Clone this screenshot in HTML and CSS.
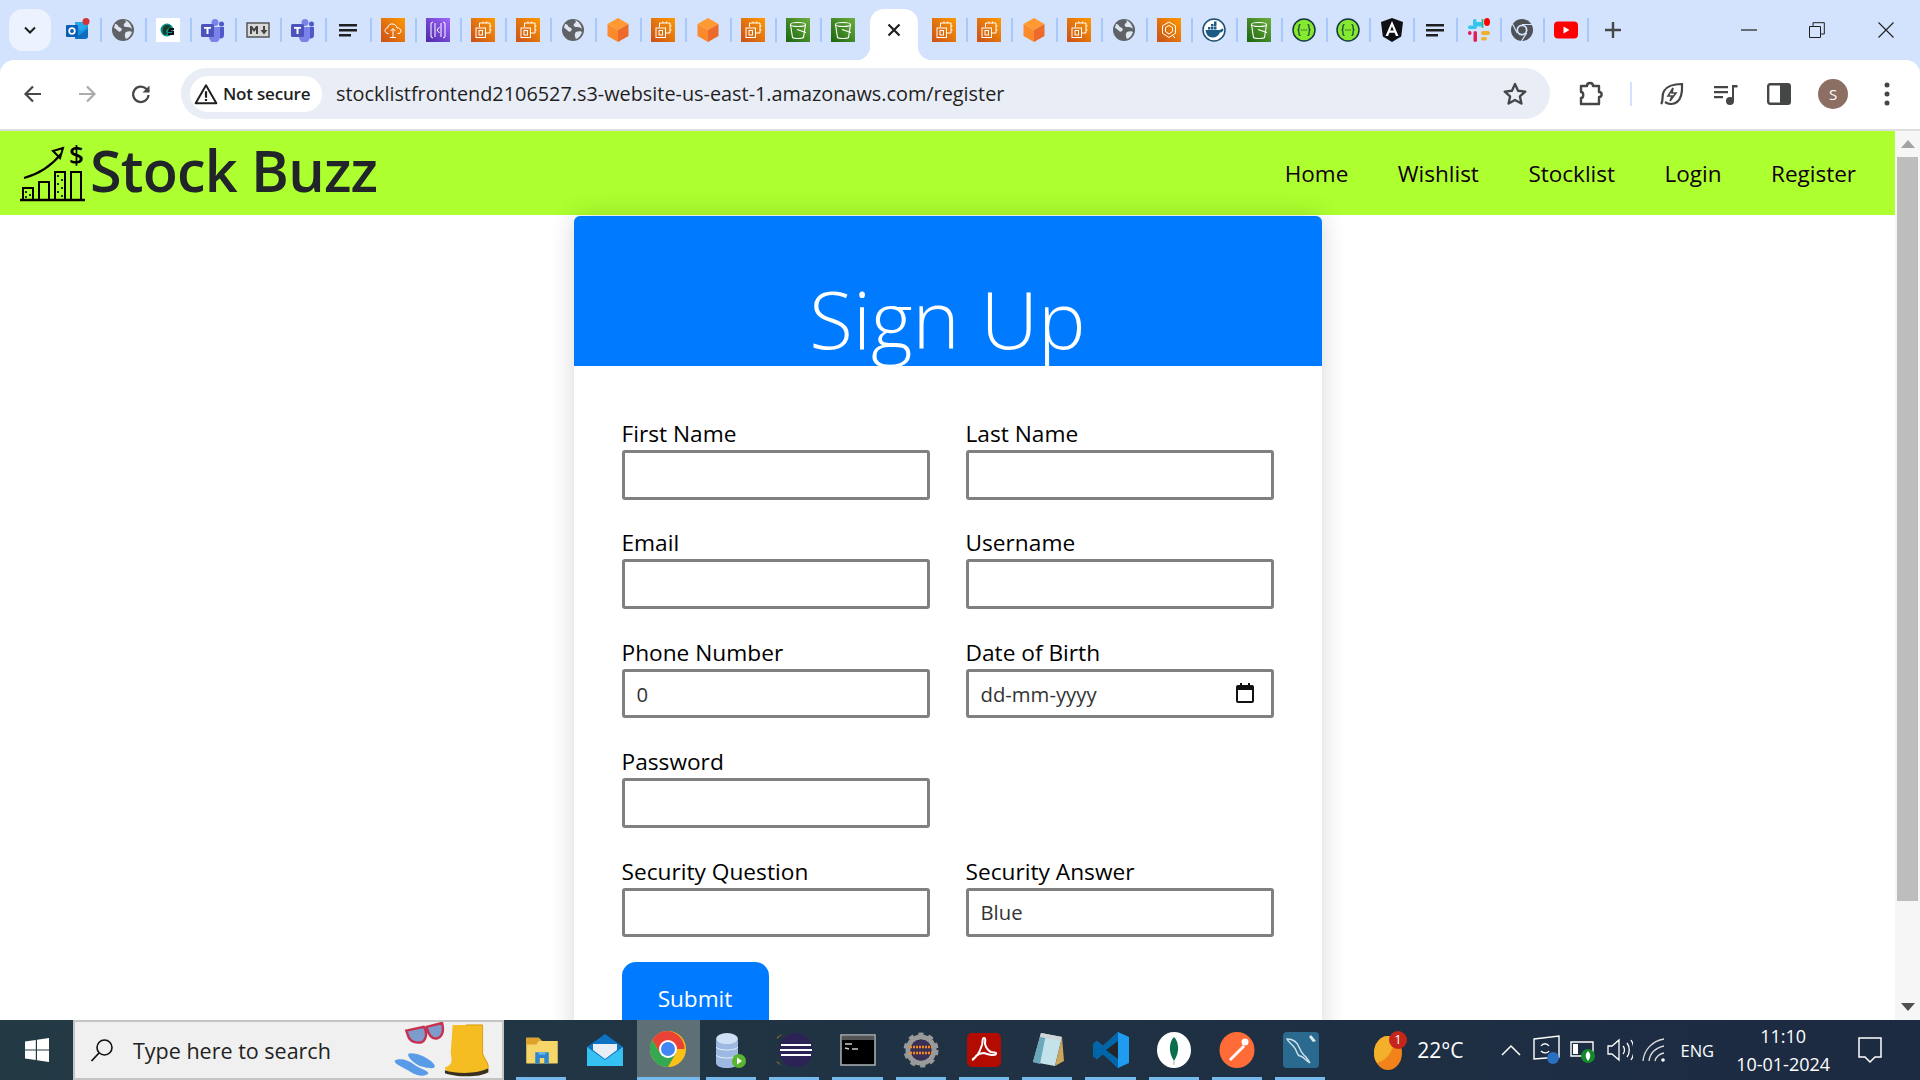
FILE: index.html
```html
<!DOCTYPE html>
<html lang="en">
<head>
<meta charset="utf-8">
<title>Stock Buzz - Register</title>
<link rel="stylesheet" href="styles.css">
</head>
<body>
<svg class="defs" width="0" height="0" aria-hidden="true">
  <defs>
    <linearGradient id="gOrange" x1="0" y1="1" x2="1" y2="0"><stop offset="0" stop-color="#c8511b"/><stop offset="1" stop-color="#ff9900"/></linearGradient>
    <linearGradient id="gGreen" x1="0" y1="1" x2="1" y2="0"><stop offset="0" stop-color="#1b660f"/><stop offset="1" stop-color="#6cae3e"/></linearGradient>
    <linearGradient id="gPurple" x1="0" y1="1" x2="1" y2="0"><stop offset="0" stop-color="#4d27a8"/><stop offset="1" stop-color="#a166ff"/></linearGradient>
    <symbol id="ec2" viewBox="0 0 24 24"><rect width="24" height="24" fill="url(#gOrange)"/><g fill="none" stroke="#fff" stroke-width="1"><path d="M8.500 9V5h10.500v10h-4"/><rect x="5" y="10" width="9.500" height="9.500"/><rect x="8" y="12.500" width="3.500" height="4.500"/><path d="M12 3.500V5M15.500 3.500V5M19 8h1.500M19 12h1.500"/></g></symbol>
    <symbol id="cube" viewBox="0 0 24 24"><path d="M12 0 22.500 6 12 12 1.500 6z" fill="#ff9a33"/><path d="M1.500 6 12 12v12L1.500 18z" fill="#fb8a2c"/><path d="M22.500 6 12 12v12l10.500-6z" fill="#ec6a2a"/></symbol>
    <symbol id="s3" viewBox="0 0 24 24"><rect width="24" height="24" fill="url(#gGreen)"/><g fill="none" stroke="#fff" stroke-width="1.100"><ellipse cx="12" cy="6.500" rx="7.500" ry="2"/><path d="M4.500 6.500 6.500 19.500c1.500 1.300 9.500 1.300 11 0l2-13"/><path d="M11 11.500l9 3"/></g></symbol>
    <symbol id="globe" viewBox="0 0 24 24"><circle cx="12" cy="12" r="11" fill="#5f6368"/><path d="M4 6c2 0 3 1 3 2s2 1 3 2 1 2 0 3-2 1-3 0-3-3-4-3zM14 2c2 2 0 3-1 4s0 3 2 3 4 0 6 2c-1-5-4-8-7-9zM15 14c2-1 5-1 6 0-1 3-3 6-6 7-1-2-2-5 0-7z" fill="#dfe6f0"/></symbol>
    <symbol id="teams" viewBox="0 0 24 24"><circle cx="14" cy="4.500" r="3.500" fill="#7b83eb"/><circle cx="20.500" cy="6" r="2.500" fill="#5059c9"/><path d="M16 9h7v8a3.500 3.500 0 0 1-7 0z" fill="#5059c9"/><path d="M8 9h11v10a5 5 0 0 1-11 0z" fill="#7b83eb"/><rect x="0" y="6" width="13" height="13" rx="1.500" fill="#4b53bc"/><path d="M3 9h7v1.800H7.500V16h-2v-5.200H3z" fill="#fff"/></symbol>
    <symbol id="lines" viewBox="0 0 24 24"><path d="M3 6h18v2.400H3zM3 11h18v2.400H3zM3 16h12v2.400H3z" fill="#1f1f1f"/></symbol>
    <symbol id="api" viewBox="0 0 24 24"><circle cx="12" cy="12" r="11" fill="#85ea2d" stroke="#173647" stroke-width="1.500"/><path d="M8.500 6.500c-2 0-1.500 2-1.500 3.500s-1 2-1.500 2c.5 0 1.500.5 1.500 2s-.5 3.500 1.500 3.500M15.500 6.500c2 0 1.500 2 1.500 3.500s1 2 1.500 2c-.5 0-1.500.5-1.500 2s.5 3.500-1.500 3.500" fill="none" stroke="#173647" stroke-width="1.200"/><path d="M9.500 12h.8M11.600 12h.8M13.700 12h.8" stroke="#173647" stroke-width="1.400"/></symbol>
    <symbol id="star" viewBox="0 0 24 24"><path d="M12 3.500l2.600 5.700 6.200.7-4.600 4.200 1.300 6.100L12 17.100l-5.500 3.100 1.300-6.100-4.600-4.200 6.200-.7z" fill="none" stroke="#444746" stroke-width="2" stroke-linejoin="round"/></symbol>
  </defs>
</svg>

<header class="tabstrip">
  <div class="tab-search"><svg width="16" height="16" viewBox="0 0 16 16"><path d="M3 5.500 8 10.500 13 5.500" fill="none" stroke="#1f1f1f" stroke-width="2"/></svg></div>
  <div class="tabs">
    <div class="tab"><svg class="ico" viewBox="0 0 24 24"><path d="M9 4h13v14a2 2 0 0 1-2 2H9z" fill="#1490df"/><path d="M9 4h13v4l-6.500 5L9 8z" fill="#28a8ea"/><path d="M9 20l13-9v7a3 3 0 0 1-3 3H9z" fill="#0f6cbd"/><rect y="7" width="12" height="12" rx="1" fill="#0a5fb4"/><circle cx="6" cy="13" r="2.800" fill="none" stroke="#fff" stroke-width="1.700"/><circle cx="20" cy="3.500" r="3.500" fill="#d13438"/></svg></div>
    <div class="tab"><svg class="ico"><use href="#globe"/></svg></div>
    <div class="tab"><svg class="ico" viewBox="0 0 24 24"><rect width="24" height="24" fill="#fff"/><circle cx="11" cy="12" r="6.500" fill="#0d8f8f"/><path d="M8 8c3-2 6-1 7 1l-3 1-2 3 1 3-3 1c-2-3-2-6 0-9z" fill="#153d22"/><path d="M13 10h5v2h-3v1h3v4h-6v-2h4v-1h-4z" fill="#111"/></svg></div>
    <div class="tab"><svg class="ico"><use href="#teams"/></svg></div>
    <div class="tab"><svg class="ico" viewBox="0 0 24 24"><rect x="1" y="5" width="22" height="14" fill="#d8d8d8" stroke="#555" stroke-width="1.500"/><path d="M4 16V8h2l2 3 2-3h2v8h-2v-4.500L8 14l-2-2.500V16zM17 8h2v4h2.500L18 16.500 14.500 12H17z" fill="#444"/></svg></div>
    <div class="tab"><svg class="ico"><use href="#teams"/></svg></div>
    <div class="tab"><svg class="ico"><use href="#lines"/></svg></div>
    <div class="tab"><svg class="ico" viewBox="0 0 24 24"><rect width="24" height="24" fill="url(#gOrange)"/><path d="M7.500 15.500C5 15.500 4 14 4 12.500S5.200 9.800 6.500 10C7 7 9.500 5.500 12 6s4 2.500 4 4c2-.3 4 1 4 3s-1.500 2.500-3.500 2.500M12 20v-9M9.500 13l2.500-2.500 2.500 2.500M9 19.500h6" fill="none" stroke="#fff" stroke-width="1"/></svg></div>
    <div class="tab"><svg class="ico" viewBox="0 0 24 24"><rect width="24" height="24" fill="url(#gPurple)"/><path d="M7 4 5 5v14l2 1M17 4l2 1v14l-2 1M9 5v14M15 5v14M13.500 9 11 12l2.500 3" fill="none" stroke="#fff" stroke-width="1"/></svg></div>
    <div class="tab"><svg class="ico"><use href="#ec2"/></svg></div>
    <div class="tab"><svg class="ico"><use href="#ec2"/></svg></div>
    <div class="tab"><svg class="ico"><use href="#globe"/></svg></div>
    <div class="tab"><svg class="ico"><use href="#cube"/></svg></div>
    <div class="tab"><svg class="ico"><use href="#ec2"/></svg></div>
    <div class="tab"><svg class="ico"><use href="#cube"/></svg></div>
    <div class="tab"><svg class="ico"><use href="#ec2"/></svg></div>
    <div class="tab"><svg class="ico"><use href="#s3"/></svg></div>
    <div class="tab tab-plain"><svg class="ico"><use href="#s3"/></svg></div>
    <div class="tab-active"><svg width="18" height="18" viewBox="0 0 18 18"><path d="M3.500 3.500l11 11M14.500 3.500l-11 11" stroke="#1f1f1f" stroke-width="2.200"/></svg></div>
    <div class="tab"><svg class="ico"><use href="#ec2"/></svg></div>
    <div class="tab"><svg class="ico"><use href="#ec2"/></svg></div>
    <div class="tab"><svg class="ico"><use href="#cube"/></svg></div>
    <div class="tab"><svg class="ico"><use href="#ec2"/></svg></div>
    <div class="tab"><svg class="ico"><use href="#globe"/></svg></div>
    <div class="tab"><svg class="ico" viewBox="0 0 24 24"><rect width="24" height="24" fill="url(#gOrange)"/><path d="M12 4l6.500 3.800v7.500L12 19.500l-6.500-4.200V7.800zM12 7.500l3.500 2v4L12 16l-3.500-2.500v-4zM15 17l3 3" fill="none" stroke="#fff" stroke-width="1"/></svg></div>
    <div class="tab"><svg class="ico" viewBox="0 0 24 24"><circle cx="12" cy="12" r="11" fill="#fff" stroke="#1d4e6f" stroke-width="1.500"/><path d="M3.500 12h14c1 0 2-.8 2.500-1.500 1 .3 1.500.8 1.500 1.500-1 2-2.500 2.500-3.500 2.500-1.500 3.500-4 5-7.500 5-4 0-6.500-3-7-7.500z" fill="#1d5b85"/><path d="M6 9h2.500v2.500H6zM9 9h2.500v2.500H9zM12 9h2.500v2.500H12zM9 6h2.500v2.500H9zM12 6h2.500v2.500H12zM12 3.500h2.500V6H12z" fill="#1d5b85"/></svg></div>
    <div class="tab"><svg class="ico"><use href="#s3"/></svg></div>
    <div class="tab"><svg class="ico"><use href="#api"/></svg></div>
    <div class="tab tab-tight"><svg class="ico"><use href="#api"/></svg></div>
    <div class="tab tab-tight"><svg class="ico" viewBox="0 0 24 24"><path d="M12 0 23 4l-1.800 14.500L12 24l-9.200-5.500L1 4z" fill="#0f0f14"/><path d="M12 3 5.500 18h2.600l1.300-3.300h5.200l1.300 3.300h2.600zM12 8.300l1.700 4.200h-3.400z" fill="#fff"/></svg></div>
    <div class="tab tab-tight"><svg class="ico"><use href="#lines"/></svg></div>
    <div class="tab tab-tight"><svg class="ico" viewBox="0 0 24 24"><rect x="9" y="1" width="4.500" height="10" rx="2.200" fill="#36c5f0" transform="rotate(90 11 6)"/><rect x="1" y="7.500" width="9" height="3.500" rx="1.700" fill="#36c5f0"/><rect x="6" y="1" width="3.500" height="6" rx="1.700" fill="#36c5f0"/><path d="M15.500 1v9" stroke="#2eb67d" stroke-width="1.800" fill="none"/><ellipse cx="20" cy="4" rx="3" ry="4" fill="#f00"/><rect x="14" y="13" width="9" height="4" rx="2" fill="#ecb22e"/><rect x="14" y="19" width="6" height="3.500" rx="1.700" fill="#ecb22e"/><rect x="1" y="13" width="3.500" height="4" rx="1.700" fill="#e01e5a"/><rect x="6.500" y="13" width="3.500" height="11" rx="1.700" fill="#e01e5a"/></svg></div>
    <div class="tab tab-tight"><svg class="ico" viewBox="0 0 24 24"><circle cx="12" cy="12" r="11" fill="#4e5256"/><circle cx="12" cy="12" r="5.500" fill="#d3e3fd"/><circle cx="12" cy="12" r="3.800" fill="#4e5256"/><path d="M12 6.500h10M7.200 15 2.500 6M16.800 15 11.500 23" stroke="#d3e3fd" stroke-width="1.200"/></svg></div>
    <div class="tab tab-tight"><svg class="ico" viewBox="0 0 24 24"><rect y="3.500" width="24" height="17" rx="4" fill="#f00"/><path d="M9.500 8.500v7l6-3.500z" fill="#fff"/></svg></div>
    <div class="newtab"><svg width="20" height="20" viewBox="0 0 20 20"><path d="M10 2v16M2 10h16" stroke="#474747" stroke-width="2.400"/></svg></div>
  </div>
  <div class="winctl">
    <span class="winbtn"><svg width="16" height="16" viewBox="0 0 16 16"><path d="M0 8h16" stroke="#1f1f1f" stroke-width="1.200"/></svg></span>
    <span class="winbtn"><svg width="16" height="16" viewBox="0 0 16 16"><path d="M.5 4.500h11v11H.5zM4 4V.7h11.300V12H12" fill="none" stroke="#1f1f1f"/></svg></span>
    <span class="winbtn"><svg width="16" height="16" viewBox="0 0 16 16"><path d="M.5.500l15 15M15.500.500l-15 15" stroke="#1f1f1f" stroke-width="1.100"/></svg></span>
  </div>
</header>

<div class="toolbar">
  <span class="tbtn"><svg width="24" height="24" viewBox="0 0 24 24"><path d="M20 12H5M12 4.500 4.500 12l7.500 7.500" fill="none" stroke="#474747" stroke-width="2.200"/></svg></span>
  <span class="tbtn"><svg width="24" height="24" viewBox="0 0 24 24"><path d="M4 12h15M12 4.500l7.500 7.500-7.500 7.500" fill="none" stroke="#ababab" stroke-width="2.200"/></svg></span>
  <span class="tbtn"><svg width="24" height="24" viewBox="0 0 24 24"><path d="M19.500 13a7.700 7.700 0 1 1-2.300-6.200L20 9.500" fill="none" stroke="#474747" stroke-width="2.200"/><path d="M20.500 3.500v7h-7z" fill="#474747"/></svg></span>
  <div class="omnibox">
    <div class="chip">
      <svg width="24" height="24" viewBox="0 0 22 22"><path d="M11 3 20.500 19.500h-19z" fill="none" stroke="#1f1f1f" stroke-width="1.800" stroke-linejoin="round"/><path d="M10 8.500h2v6h-2zM10 15.500h2v2h-2z" fill="#1f1f1f"/></svg>
      <span>Not secure</span>
    </div>
    <span class="url">stocklistfrontend2106527.s3-website-us-east-1.amazonaws.com/register</span>
    <svg class="bookmark" width="28" height="28"><use href="#star"/></svg>
  </div>
  <span class="tbtn"><svg width="28" height="28" viewBox="0 0 28 28"><path d="M4 6h6c0-4 6-4 6 0h6v6c3.500 0 3.500 5 0 5v7H4v-6c3 0 3-6 0-6z" fill="none" stroke="#444746" stroke-width="2.400" stroke-linejoin="round"/></svg></span>
  <span class="tb-sep"></span>
  <span class="tbtn"><svg width="28" height="28" viewBox="0 0 28 28"><path d="M4 24c3-3 0-8 3-13S16 4 25 4c.5 9-1 15-5 18s-9 2-12 0" fill="none" stroke="#444746" stroke-width="2.200"/><path d="M16 8l-5 8h4l-2 5 6-8h-4z" fill="none" stroke="#444746" stroke-width="1.600"/></svg></span>
  <span class="tbtn"><svg width="28" height="28" viewBox="0 0 28 28"><path d="M3 6h14v2.200H3zM3 11h14v2.200H3zM3 16h9v2.200H3z" fill="#444746"/><path d="M21 5h5.500v2.600H23v13.400h-2z" fill="#444746"/><circle cx="19" cy="21" r="4" fill="#444746"/></svg></span>
  <span class="tbtn"><svg width="28" height="28" viewBox="0 0 28 28"><rect x="3.200" y="4.200" width="21.600" height="19.600" rx="2" fill="none" stroke="#444746" stroke-width="2.400"/><rect x="15" y="4" width="10" height="20" fill="#444746"/></svg></span>
  <span class="tbtn"><span class="avatar">S</span></span>
  <span class="tbtn"><svg width="8" height="26" viewBox="0 0 8 26"><circle cx="4" cy="4" r="2.500" fill="#444746"/><circle cx="4" cy="13" r="2.500" fill="#444746"/><circle cx="4" cy="22" r="2.500" fill="#444746"/></svg></span>
</div>

<div class="window">
  <div class="viewport">
    <nav class="navbar">
      <a class="brand">
        <svg class="brand-logo" width="68" height="58" viewBox="0 0 68 58"><g fill="none" stroke="#000" stroke-width="2"><path d="M1 56h65" stroke-width="2.500"/><rect x="4" y="44" width="10" height="12"/><rect x="20" y="38" width="10" height="18"/><rect x="36" y="28" width="10" height="28"/><rect x="52" y="28" width="10" height="28"/><path d="M5 34C20 30 33 21 42 10"/><path d="M34 7l10-3-3 10z"/></g><g fill="#000"><circle cx="7" cy="48" r="1.100"/><circle cx="11" cy="51" r="1.100"/><circle cx="7" cy="53" r="1.100"/><circle cx="39" cy="32" r="1.100"/><circle cx="43" cy="36" r="1.100"/><circle cx="39" cy="40" r="1.100"/><circle cx="43" cy="44" r="1.100"/><circle cx="39" cy="48" r="1.100"/><circle cx="43" cy="52" r="1.100"/></g><text x="50" y="20" class="brand-dollar">$</text></svg>
        <span>Stock Buzz</span>
      </a>
      <ul class="navlinks">
        <li>Home</li><li>Wishlist</li><li>Stocklist</li><li>Login</li><li>Register</li>
      </ul>
    </nav>
    <main class="card">
      <div class="card-head"><h1>Sign Up</h1></div>
      <form class="signup">
        <div class="field"><label>First Name</label><input type="text"></div>
        <div class="field"><label>Last Name</label><input type="text"></div>
        <div class="field"><label>Email</label><input type="text"></div>
        <div class="field"><label>Username</label><input type="text"></div>
        <div class="field"><label>Phone Number</label><input type="text" value="0"></div>
        <div class="field date"><label>Date of Birth</label><input type="text" value="dd-mm-yyyy">
          <svg class="cal" width="18" height="20" viewBox="0 0 18 20"><path d="M4 0h2v2h6V0h2v2h2a2 2 0 0 1 2 2v14a2 2 0 0 1-2 2H2a2 2 0 0 1-2-2V4a2 2 0 0 1 2-2h2zM2 7v11h14V7z" fill="#111"/></svg></div>
        <div class="field"><label>Password</label><input type="password"></div>
        <div class="field"></div>
        <div class="field"><label>Security Question</label><input type="text"></div>
        <div class="field"><label>Security Answer</label><input type="text" value="Blue"></div>
        <button type="button" class="submit">Submit</button>
      </form>
    </main>
  </div>
  <aside class="scrollbar">
    <svg width="16" height="10" viewBox="0 0 16 10"><path d="M8 1l7 8H1z" fill="#a3a3a3"/></svg>
    <div class="thumb"></div>
    <svg width="16" height="10" viewBox="0 0 16 10"><path d="M8 9 1 1h14z" fill="#505050"/></svg>
  </aside>
</div>

<footer class="taskbar">
  <div class="start"><svg width="24" height="24" viewBox="0 0 24 24"><path d="M0 3.500 10.800 2v9.500H0zM12 1.800 24 0v11.500H12zM0 12.500h10.800V22L0 20.500zM12 12.500h12V24l-12-1.800z" fill="#fff"/></svg></div>
  <div class="search">
    <svg width="26" height="26" viewBox="0 0 26 26"><circle cx="15.500" cy="10.500" r="7.500" fill="none" stroke="#111" stroke-width="1.600"/><path d="M10 16 2.500 24" stroke="#111" stroke-width="1.800"/></svg>
    <span>Type here to search</span>
    <svg class="search-art" width="100" height="56" viewBox="0 0 100 58"><path d="M12 9 30 5c4 5 3 13-2 16-5 1-12 0-14-6zM33 5l16-4c2 7 1 14-5 16-5 1-9-3-11-12z" fill="#7d9ccb" stroke="#c8304f" stroke-width="2.500"/><path d="M0 40c5-3 14-1 20 4s13 5 15 9c-3 4-12 3-18-1S-1 44 0 40zM14 33c5-2 15 2 20 5s9 7 7 9-13 0-18-3-10-8-9-11z" fill="#5a9be8"/><path d="M60 3h31v29c2 6 6 9 6 15s-12 8-21 8-24-2-24-8c9-3 7-8 6-15z" fill="#f5bd22"/><path d="M74 3h17v30c2 6 6 9 6 14" fill="none" stroke="#d99a10" stroke-width="1"/><path d="M52 50c12 4 34 4 45-2v4c-10 6-34 5-45 1z" fill="#3a3020"/></svg>
  </div>
  <div class="apps">
    <div class="app on"><svg class="tico" viewBox="0 0 32 32"><path d="M2 5h11l3 3h14v20H2z" fill="#f6d569"/><path d="M2 5h11l3 3h-3l-2 3H2z" fill="#dda22c"/><path d="M10 28V18h12v10h-4v-5h-4v5z" fill="#2e87ce"/><path d="M13 18h6v2h-6z" fill="#6bb8ef"/></svg></div>
    <div class="app"><svg class="tico" viewBox="0 0 36 32"><path d="M18 0 36 13v19H0V13z" fill="#0d72c4"/><path d="M0 13 18 26l18-13v19H0z" fill="#35c1f2"/><path d="M6 10h24v6L18 25 6 16z" fill="#e8eef5"/></svg></div>
    <div class="app chrome"><svg width="38" height="38" viewBox="0 0 38 38"><circle cx="19" cy="19" r="18" fill="#fbc116"/><path d="M19 1A18 18 0 0 0 3.400 10L11 23l8-4h16.500A18 18 0 0 0 19 1z" fill="#ea4335"/><path d="M3.400 10A18 18 0 0 0 19 37l8-14-8-4-8 4z" fill="#34a853"/><circle cx="19" cy="19" r="9" fill="#fff"/><circle cx="19" cy="19" r="7" fill="#4285f4"/></svg></div>
    <div class="app on"><svg class="tico" viewBox="0 0 32 36"><ellipse cx="12" cy="7" rx="11" ry="6" fill="#cfe0f6"/><path d="M1 7v24c0 3 5 5 11 5s11-2 11-5V7c0 3-5 5-11 5S1 10 1 7z" fill="#9db9e2"/><path d="M1 15c2 4 20 4 22 0M1 23c2 4 20 4 22 0" stroke="#e6eefb" fill="none"/><circle cx="24" cy="29" r="7" fill="#59b52e"/><path d="M22 25.500v7l5-3.500z" fill="#fff"/></svg></div>
    <div class="app on"><svg class="tico" viewBox="0 0 36 36"><circle cx="19" cy="18" r="17" fill="#2c2255"/><path d="M6 2a18 18 0 0 0 0 32A17 17 0 0 1 6 2z" fill="#f7941e"/><path d="M4 13h30M3 18h32M4 23h30" stroke="#fff" stroke-width="2"/></svg></div>
    <div class="app on"><svg class="tico" viewBox="0 0 36 32"><rect x="1" y="1" width="34" height="30" fill="#000" stroke="#aeb4b8" stroke-width="1.500"/><rect x="2" y="2" width="32" height="4" fill="#555"/><path d="M5 10h7M5 14l4 1M12 15h6" stroke="#ccc" stroke-width="1.500"/></svg></div>
    <div class="app on"><svg class="tico" viewBox="0 0 36 36"><circle cx="18" cy="18" r="13" fill="none" stroke="#9a9a9a" stroke-width="5"/><circle cx="18" cy="18" r="15.500" fill="none" stroke="#9a9a9a" stroke-width="4" stroke-dasharray="5 5"/><circle cx="18" cy="18" r="10.500" fill="#3a2f55"/><path d="M7 15h22M7 21h22" stroke="#f58a1f" stroke-width="2.500" stroke-dasharray="2 1"/></svg></div>
    <div class="app on"><svg class="tico" viewBox="0 0 36 36"><rect x="1" y="1" width="34" height="34" rx="5" fill="#b30b00"/><path d="M7 27c4-2 7-8 9-14 1-4 0-7 2-7s1 4 1 6c1 4 4 7 6 8 3 1 6 0 5 2s-7 1-12-1c-3 0-6 1-8 3-2 3-4 5-3 3z" fill="none" stroke="#fff" stroke-width="2"/></svg></div>
    <div class="app on"><svg class="tico" viewBox="0 0 36 36"><path d="M11 1 32 5 25 34 3 30z" fill="#c3e2ea"/><path d="M3 30 11 1l5 1-6 30z" fill="#6ba8bb"/><path d="M11 1 32 5l-1 4L10 5z" fill="#cfd5d9"/><path d="M32 5l2 24-9 5z" fill="#c9a65a"/></svg></div>
    <div class="app on"><svg class="tico" viewBox="0 0 36 36"><path d="M25 0 36 5v26l-11 5-15-14-6 5-4-3v-12l4-3 6 5z" fill="#1f9cf0"/><path d="M25 0 10 14 4 9l-4 3v12l4 3 6-5L25 36z" fill="#0065a9"/><path d="M25 9v18L13 18z" fill="#22262a"/></svg></div>
    <div class="app on"><svg class="tico" viewBox="0 0 36 36"><ellipse cx="18" cy="18" rx="17" ry="18" fill="#fff"/><path d="M18 5c5 5 6 15 0 24-6-9-5-19 0-24z" fill="#0d6e4d"/><path d="M18 29v4" stroke="#b8c4a8" stroke-width="1.200"/></svg></div>
    <div class="app on"><svg class="tico" viewBox="0 0 36 36"><ellipse cx="18" cy="18" rx="17.500" ry="18" fill="#ff6c37"/><path d="M10 27 24 13l2 2-14 14z" fill="#fff"/><circle cx="26" cy="10" r="3.500" fill="#fff"/></svg></div>
    <div class="app on"><svg class="tico" viewBox="0 0 36 36"><rect width="36" height="36" rx="4" fill="#2a6a8e"/><path d="M4 7c6 0 10 3 12 8s3 7 7 10l4 6c-5-3-7-7-10-7s-3-6-6-9C9 12 5 10 4 7z" fill="none" stroke="#cfe0ea" stroke-width="1.400"/><path d="M28 3l5 6-3 1-4-5z" fill="#dfe8ee"/></svg></div>
  </div>
  <div class="tray">
    <div class="weather"><svg width="34" height="40" viewBox="0 0 34 40"><ellipse cx="15" cy="23" rx="14" ry="17" fill="#f2831a"/><path d="M15 6a14 17 0 0 0-14 17c0 4 1 7 3 10 8-2 16-10 18-24a14 14 0 0 0-7-3z" fill="#f3b02a"/><circle cx="25" cy="10" r="9" fill="#c4261c"/><text x="25" y="14" class="badge">1</text></svg><span class="temp">22°C</span></div>
    <svg class="tray-chev" width="22" height="14" viewBox="0 0 22 14"><path d="M2 12 11 3l9 9" fill="none" stroke="#fff" stroke-width="1.500"/></svg>
    <svg class="tray-ico tray-first" width="28" height="30" viewBox="0 0 28 30"><path d="M1 4 26 1v21L1 24z" fill="none" stroke="#fff" stroke-width="1.400"/><path d="M8 11c2-3 6-3 8 0M8 16c2 2 6 3 8 0" fill="none" stroke="#fff" stroke-width="1.300"/><circle cx="20" cy="23" r="6" fill="#2a6fc2"/></svg>
    <svg class="tray-ico" width="28" height="28" viewBox="0 0 28 28"><path d="M1 6h22v14H1z" fill="none" stroke="#fff" stroke-width="1.400"/><rect x="3" y="8" width="5" height="10" fill="#fff"/><circle cx="18" cy="20" r="7" fill="#138a2e"/><path d="M18 15c3 3 3 6 0 10-3-4-3-7 0-10z" fill="#fff"/></svg>
    <svg class="tray-ico" width="26" height="24" viewBox="0 0 26 24"><path d="M1 8h4l7-6v20l-7-6H1zM16 8c2 2 2 6 0 8M20 5c3 4 3 10 0 14M24 2c4 6 4 14 0 20" fill="none" stroke="#fff" stroke-width="1.300"/></svg>
    <svg class="tray-ico" width="24" height="24" viewBox="0 0 24 24"><path d="M1 23C2 12 10 3 22 1M7 23c1-8 6-13 15-15M13 23c1-4 4-7 9-8" fill="none" stroke="#ddd" stroke-width="1.300"/><circle cx="21" cy="22" r="1.800" fill="#fff"/></svg>
    <span class="lang">ENG</span>
    <div class="clock"><span>11:10</span><span>10-01-2024</span></div>
    <svg class="notif" width="24" height="26" viewBox="0 0 24 26"><path d="M1 1h22v19h-6l-5 5-5-5H1z" fill="none" stroke="#fff" stroke-width="1.500"/></svg>
  </div>
</footer>
</body>
</html>
```

FILE: styles.css
```css
* { box-sizing: border-box; }
html, body { margin: 0; height: 100%; }
body {
  width: 1920px;
  height: 1080px;
  overflow: hidden;
  display: flex;
  flex-direction: column;
  font-family: "Open Sans", "Noto Sans", sans-serif;
  background: #d3e3fd;
  color: #000;
}
.defs { position: absolute; }

/* tab strip */
.tabstrip {
  height: 60px;
  flex: none;
  display: flex;
  align-items: flex-end;
  padding-left: 9px;
}
.tab-search {
  width: 42px;
  height: 42px;
  margin-bottom: 9px;
  border-radius: 14px;
  background: #ecf3fe;
  display: flex;
  align-items: center;
  justify-content: center;
}
.tabs {
  display: flex;
  height: 100%;
  align-items: stretch;
  margin-left: 5.500px;
}
.tab {
  width: 45px;
  display: flex;
  align-items: center;
}
.tab-tight { width: 43.500px; }
.tab .ico { width: 24px; height: 24px; margin: 0 auto; flex: none; }
.tab::after {
  content: "";
  width: 2px;
  height: 24px;
  background: #a8c7fa;
  flex: none;
}
.tab-plain::after { background: transparent; }
.tab-active {
  position: relative;
  width: 48px;
  margin: 9px 5px 0 3px;
  background: #fff;
  border-radius: 14px 14px 0 0;
  display: flex;
  align-items: flex-start;
  justify-content: center;
  padding-top: 12px;
}
.tab-active::before,
.tab-active::after {
  content: "";
  position: absolute;
  bottom: 0;
  width: 14px;
  height: 14px;
}
.tab-active::before { left: -14px; background: radial-gradient(circle at 0 0, #d3e3fd 14px, #fff 14.500px); }
.tab-active::after { right: -14px; background: radial-gradient(circle at 100% 0, #d3e3fd 14px, #fff 14.500px); }
.newtab {
  width: 38px;
  margin-left: 5px;
  display: flex;
  align-items: center;
  justify-content: center;
}
.winctl {
  margin-left: auto;
  display: flex;
  height: 100%;
  align-items: center;
}
.winbtn {
  width: 68.500px;
  display: flex;
  align-items: center;
  justify-content: center;
}

/* toolbar */
.toolbar {
  height: 71px;
  flex: none;
  background: #fff;
  border-radius: 14px 14px 0 0;
  border-bottom: 2px solid #dfdfdf;
  display: flex;
  align-items: center;
  padding: 0 6px 2px;
}
.tbtn {
  width: 54px;
  flex: none;
  display: flex;
  align-items: center;
  justify-content: center;
}
.omnibox {
  flex: 1;
  margin: 0 14px 0 13px;
  height: 51px;
  border-radius: 26px;
  background: #e9edf6;
  display: flex;
  align-items: center;
  padding: 0 21px 0 9px;
}
.chip {
  height: 36px;
  width: 132px;
  flex: none;
  border-radius: 18px;
  background: #fff;
  display: flex;
  align-items: center;
  gap: 5px;
  padding-left: 4px;
  font-size: 17px;
  font-weight: 600;
  letter-spacing: -.2px;
  color: #1f1f1f;
  white-space: nowrap;
}
.url {
  margin-left: 14px;
  font-size: 19.850px;
  color: #1f1f1f;
  white-space: nowrap;
}
.bookmark { margin-left: auto; }
.tb-sep {
  width: 2px;
  height: 24px;
  flex: none;
  margin: 0 12px;
  background: #d3e3fd;
}
.avatar {
  width: 30px;
  height: 30px;
  border-radius: 50%;
  background: #8d6e63;
  color: #fff;
  font-size: 15px;
  display: flex;
  align-items: center;
  justify-content: center;
}

/* page window */
.window {
  flex: 1;
  min-height: 0;
  display: flex;
  background: #fff;
}
.viewport {
  flex: 1;
  min-width: 0;
  overflow: hidden;
}
.navbar {
  height: 84px;
  background: #adff2f;
  display: flex;
  align-items: center;
  padding: 0 39px 0 19px;
}
.brand {
  display: flex;
  align-items: center;
  gap: 3px;
  color: #212529;
  font-size: 57.500px;
  line-height: 70px;
  font-weight: 600;
  letter-spacing: -.8px;
}
.brand > span { margin-top: -6px; }
.brand-logo { flex: none; overflow: visible; }
.brand-dollar { font-size: 26px; font-weight: 600; fill: #000; letter-spacing: 0; }
.navlinks {
  list-style: none;
  margin: 1px 0 0 auto;
  padding: 0;
  display: flex;
  gap: 49.500px;
  font-size: 22.500px;
  color: #100010;
}
.card {
  width: 748px;
  margin: 1px auto 0;
  background: #fff;
  border-radius: 6px 6px 0 0;
  box-shadow: 0 0 26px rgba(0, 0, 0, .16);
  padding-bottom: 60px;
}
.card-head {
  height: 150px;
  background: #007bff;
  border-radius: 6px 6px 0 0;
  text-align: center;
  color: #fff;
}
.card-head h1 {
  margin: 0;
  padding-top: 52px;
  font-size: 80px;
  line-height: 100px;
  font-weight: 300;
}
.signup {
  padding: 52px 48px 0;
  display: grid;
  grid-template-columns: 308px 308px;
  column-gap: 36px;
  row-gap: 27.800px;
}
.field { display: flex; flex-direction: column; position: relative; min-height: 81.600px; }
.field label {
  font-size: 22.700px;
  line-height: 32px;
  color: #000;
}
.field input {
  height: 49.600px;
  border: 3px solid #808080;
  border-radius: 3px;
  padding: 0 12px;
  font: 400 20.300px "Open Sans", sans-serif;
  color: #333;
  background: #fff;
  outline: none;
}
.cal { position: absolute; right: 20px; bottom: 15px; }
.submit {
  grid-column: 1;
  justify-self: start;
  width: 147px;
  height: 74px;
  margin-top: -3px;
  border: 0;
  border-radius: 14px;
  background: #007bff;
  color: #fff;
  font: 400 22.600px "Open Sans", sans-serif;
}
.scrollbar {
  width: 25px;
  flex: none;
  background: #f6f6f6;
  display: flex;
  flex-direction: column;
  align-items: center;
  justify-content: space-between;
  padding: 8px 0;
}
.thumb {
  width: 21px;
  height: 744px;
  background: #bdbdbd;
  margin: 0 0 94px;
}

/* taskbar */
.taskbar {
  height: 60px;
  flex: none;
  display: flex;
  align-items: stretch;
  background: linear-gradient(90deg, #233a45, #1c2a42);
  color: #fff;
}
.start {
  width: 73px;
  flex: none;
  display: flex;
  align-items: center;
  justify-content: center;
}
.search {
  width: 431px;
  flex: none;
  border: 2px solid #c4c4c4;
  background: #f0f0f0;
  display: flex;
  align-items: center;
  padding-left: 14px;
  color: #222;
  font-size: 21.500px;
  overflow: hidden;
}
.search > span { margin-left: 18px; white-space: nowrap; }
.search-art { margin-left: auto; margin-right: 9px; flex: none; overflow: visible; }
.apps { display: flex; flex: none; margin-left: 6px; }
.app {
  width: 63.250px;
  display: flex;
  align-items: center;
  justify-content: center;
  position: relative;
}
.app.on::after {
  content: "";
  position: absolute;
  left: 6px;
  right: 7px;
  bottom: 0;
  height: 3px;
  background: #76b9ed;
}
.chrome { background: #5f6f76; border-bottom: 3px solid #76b9ed; }
.tico { width: 36px; height: 36px; }
.tray {
  flex: 1;
  min-width: 0;
  display: flex;
  align-items: center;
  padding-left: 41px;
}
.weather { display: flex; align-items: center; gap: 10px; flex: none; }
.badge { font-size: 13px; fill: #fff; text-anchor: middle; }
.temp { font-size: 21px; }
.tray-chev { margin-left: 36px; flex: none; }
.tray-ico { margin-left: 9px; flex: none; }
.tray-ico.tray-first { margin-left: 11px; }
.lang { margin-left: 15px; font-size: 16.500px; flex: none; }
.clock {
  margin-left: 19px;
  width: 100px;
  flex: none;
  display: flex;
  flex-direction: column;
  align-items: center;
  font-size: 18px;
  line-height: 28px;
}
.notif { margin-left: 25px; flex: none; }
```
